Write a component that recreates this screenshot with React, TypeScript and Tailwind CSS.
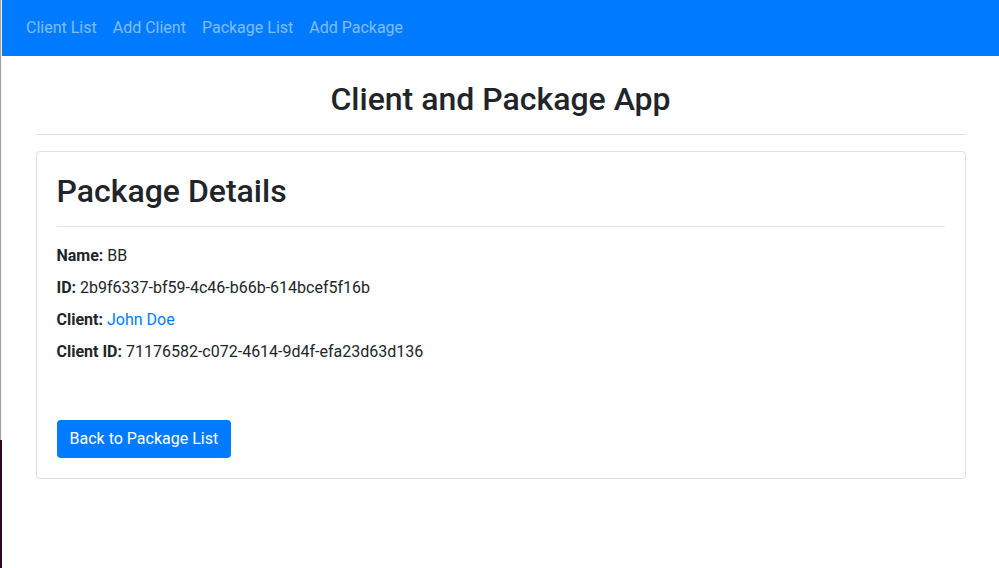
import React from 'react';

const navLinks = ['Client List', 'Add Client', 'Package List', 'Add Package'];

const details = [
  { label: 'Name:', value: 'BB' },
  { label: 'ID:', value: '2b9f6337-bf59-4c46-b66b-614bcef5f16b' },
  { label: 'Client:', value: 'John Doe', link: true },
  { label: 'Client ID:', value: '71176582-c072-4614-9d4f-efa23d63d136' },
];

const App = () => {
  return (
    <div
      className="flex h-[568px] w-full overflow-hidden bg-white text-[#212529]"
      style={{ fontFamily: 'Roboto, "Liberation Sans", sans-serif' }}
    >
      {/* window edge */}
      <div className="flex w-[2px] shrink-0 flex-col">
        <div className="flex h-[440px] w-full">
          <div className="w-px bg-[#a3a3a3]" />
          <div className="w-px bg-[#f2f2f2]" />
        </div>
        <div className="flex-1 bg-[#2a0b20]" />
      </div>

      <div className="flex-1">
        <nav className="flex h-14 items-center bg-[#007bff] px-4">
          {navLinks.map((l) => (
            <a key={l} href="#" className="px-2 py-2 text-base leading-6 text-white/50">
              {l}
            </a>
          ))}
        </nav>

        <div className="mx-auto max-w-[960px] px-[15px]">
          <h1 className="mt-6 mb-4 text-center text-[32px] leading-[38px] font-medium">
            Client and Package App
          </h1>
          <hr className="border-t border-[#e3e3e3]" />

          <div className="mt-4 rounded border border-[#dfdfdf] p-5">
            <h2 className="text-[32px] leading-[38px] font-medium">Package Details</h2>
            <hr className="mt-4 border-t border-[#e3e3e3]" />
            <div className="mt-[17px]">
              {details.map((d) => (
                <p key={d.label} className="mb-2 text-base leading-6">
                  <strong className="font-bold">{d.label}</strong>{' '}
                  {d.link ? (
                    <a href="#" className="text-[#007bff]">
                      {d.value}
                    </a>
                  ) : (
                    d.value
                  )}
                </p>
              ))}
            </div>
            <button className="mt-[48px] rounded bg-[#007bff] px-[13px] py-[7px] text-base leading-6 text-white">
              Back to Package List
            </button>
          </div>
        </div>
      </div>
    </div>
  );
};

export default App;
